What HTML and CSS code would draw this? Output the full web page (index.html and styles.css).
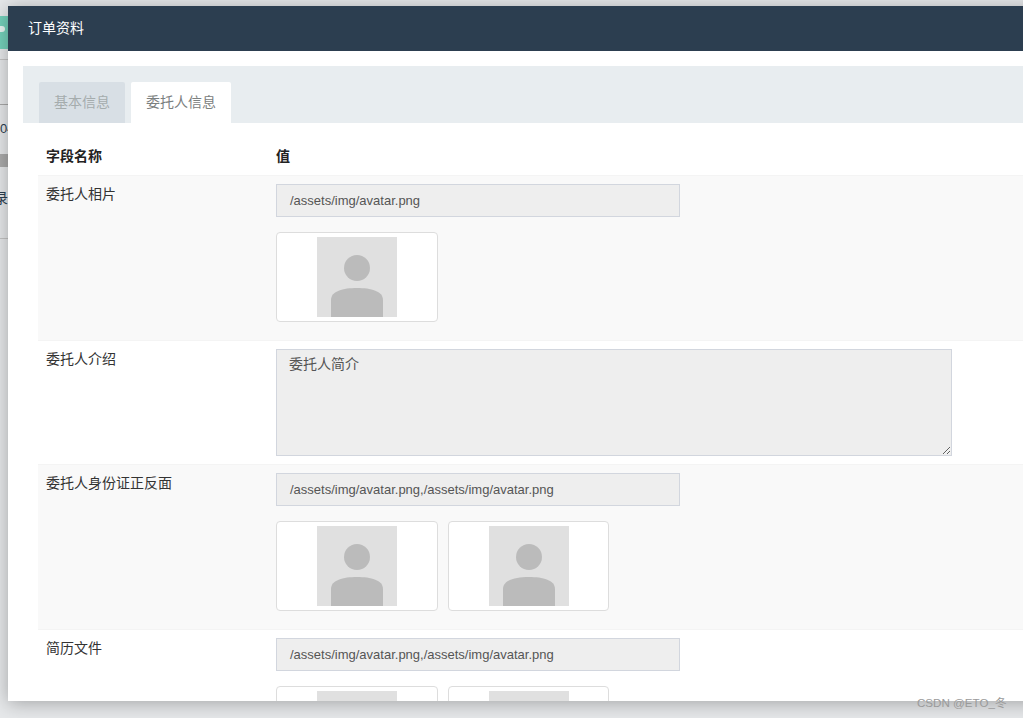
FILE: index.html
```html
<!DOCTYPE html>
<html lang="zh-CN">
<head>
<meta charset="utf-8">
<title>订单资料</title>
<link rel="stylesheet" href="styles.css">
</head>
<body>
<div class="backdrop">
  <div class="bg-green"><span class="bg-icon"></span></div>
  <div class="bg-line bg-line-a"></div>
  <div class="bg-line bg-line-b"></div>
  <div class="bg-text bg-text-a">04</div>
  <div class="bg-bar"></div>
  <div class="bg-text bg-text-b">录</div>
  <div class="bg-line bg-line-c"></div>
</div>
<section class="modal">
  <header class="modal-head">订单资料</header>
  <div class="modal-body">
    <nav class="tabs">
      <a class="tab">基本信息</a>
      <a class="tab active">委托人信息</a>
    </nav>
    <div class="table">
      <div class="row head"><div class="name">字段名称</div><div class="value">值</div></div>
      <div class="row odd">
        <div class="name">委托人相片</div>
        <div class="value">
          <div class="input">/assets/img/avatar.png</div>
          <div class="thumbs">
            <div class="thumb"><svg class="avatar" viewBox="0 0 80 80"><rect width="80" height="80" fill="#e0e0e0"/><circle cx="40" cy="31" r="13" fill="#bbb"/><path d="M14 80V63C14 54 26 51 40 51S66 54 66 63V80Z" fill="#bbb"/></svg></div>
          </div>
        </div>
      </div>
      <div class="row">
        <div class="name">委托人介绍</div>
        <div class="value"><textarea class="textarea" disabled>委托人简介</textarea></div>
      </div>
      <div class="row odd">
        <div class="name">委托人身份证正反面</div>
        <div class="value">
          <div class="input">/assets/img/avatar.png,/assets/img/avatar.png</div>
          <div class="thumbs">
            <div class="thumb"><svg class="avatar" viewBox="0 0 80 80"><rect width="80" height="80" fill="#e0e0e0"/><circle cx="40" cy="31" r="13" fill="#bbb"/><path d="M14 80V63C14 54 26 51 40 51S66 54 66 63V80Z" fill="#bbb"/></svg></div>
            <div class="thumb narrow"><svg class="avatar" viewBox="0 0 80 80"><rect width="80" height="80" fill="#e0e0e0"/><circle cx="40" cy="31" r="13" fill="#bbb"/><path d="M14 80V63C14 54 26 51 40 51S66 54 66 63V80Z" fill="#bbb"/></svg></div>
          </div>
        </div>
      </div>
      <div class="row">
        <div class="name">简历文件</div>
        <div class="value">
          <div class="input">/assets/img/avatar.png,/assets/img/avatar.png</div>
          <div class="thumbs">
            <div class="thumb"><svg class="avatar" viewBox="0 0 80 80"><rect width="80" height="80" fill="#e0e0e0"/><circle cx="40" cy="31" r="13" fill="#bbb"/><path d="M14 80V63C14 54 26 51 40 51S66 54 66 63V80Z" fill="#bbb"/></svg></div>
            <div class="thumb narrow"><svg class="avatar" viewBox="0 0 80 80"><rect width="80" height="80" fill="#e0e0e0"/><circle cx="40" cy="31" r="13" fill="#bbb"/><path d="M14 80V63C14 54 26 51 40 51S66 54 66 63V80Z" fill="#bbb"/></svg></div>
          </div>
        </div>
      </div>
    </div>
  </div>
</section>
<div class="watermark">CSDN @ETO_冬</div>
</body>
</html>
```
FILE: styles.css
```css
* { box-sizing: border-box; }
html, body { margin: 0; height: 100%; overflow: hidden; }
body {
  position: relative;
  width: 1023px;
  height: 718px;
  background: #e4e7e9;
  font-family: "Liberation Sans", "Noto Sans CJK SC", sans-serif;
  font-size: 13px;
  color: #444;
}
.backdrop { position: absolute; inset: 0; background: #e6e8ea; overflow: hidden; }
.bg-green { position: absolute; left: 0; top: 16px; width: 8px; height: 33px; background: #74d0ba; }
.bg-icon { position: absolute; left: 0; top: 10px; width: 5px; height: 6px; background: #e8f5f2; border-radius: 0 3px 3px 0; }
.bg-line { position: absolute; left: 0; width: 8px; height: 1px; background: #c4c4c4; }
.bg-line-a { top: 59px; }
.bg-line-b { top: 104px; background: #a8a8a8; }
.bg-line-c { top: 238px; }
.bg-bar { position: absolute; left: 0; top: 154px; width: 8px; height: 13px; background: #ababab; }
.bg-text { position: absolute; left: 0; font-size: 13px; color: #2c3e50; }
.bg-text-a { top: 121px; }
.bg-text-b { top: 187px; left: -6px; font-size: 14px; }
.modal {
  position: absolute;
  left: 8px;
  top: 6px;
  width: 1040px;
  height: 695px;
  background: #fff;
  overflow: hidden;
  box-shadow: 0 2px 18px rgba(0, 0, 0, .3);
}
.modal-head {
  height: 45px;
  background: #2c3e50;
  color: #fff;
  font-size: 14px;
  line-height: 45px;
  padding-left: 20px;
}
.modal-body { padding: 15px 0 0 15px; }
.tabs {
  display: flex;
  gap: 6px;
  height: 57px;
  padding: 16px 0 0 16px;
  background: #e8edf0;
}
.tab {
  width: 86px;
  height: 41px;
  background: #d8dfe5;
  color: #a5acad;
  font-size: 14px;
  line-height: 40px;
  text-align: center;
  border-radius: 2px 2px 0 0;
}
.tab.active { width: 100px; background: #fff; color: #7b8080; }
.table { padding: 16px 0 0 15px; }
.row { display: flex; border-top: 1px solid #f4f4f4; }
.row:first-child { border-top: 0; }
.row.head { height: 36px; font-weight: 700; color: #333; font-size: 14px; line-height: 34px; }
.row.odd { background: #f9f9f9; }
.name {
  width: 230px;
  flex: none;
  padding: 8px;
  color: #333;
  font-size: 14px;
  line-height: 20px;
}
.row.head .name { padding: 0 8px; line-height: 34px; color: #222; }
.value { padding: 8px; flex: 1; }
.row.head .value { padding: 0 8px; color: #222; }
.input {
  width: 404px;
  height: 33px;
  padding: 0 13px;
  background: #eee;
  border: 1px solid #d2d6de;
  line-height: 31px;
  color: #555;
  font-size: 13px;
}
.textarea {
  display: block;
  width: 676px;
  height: 107px;
  padding: 4px 12px;
  background: #eee;
  border: 1px solid #d2d6de;
  font-family: "Liberation Sans", "Noto Sans CJK SC", sans-serif;
  font-size: 14px;
  line-height: 20px;
  color: #555;
  resize: vertical;
  border-radius: 0;
}
.thumbs { display: flex; gap: 10px; margin-top: 15px; margin-bottom: 10px; }
.thumb {
  width: 162px;
  height: 90px;
  padding: 4px;
  background: #fff;
  border: 1px solid #ddd;
  border-radius: 4px;
  display: flex;
  justify-content: center;
}
.thumb.narrow { width: 161px; }
.avatar { width: 80px; height: 80px; display: block; }
.watermark {
  position: absolute;
  left: 917px;
  top: 694px;
  color: #9a9a9a;
  font-size: 11.6px;
  line-height: 18px;
}
```
